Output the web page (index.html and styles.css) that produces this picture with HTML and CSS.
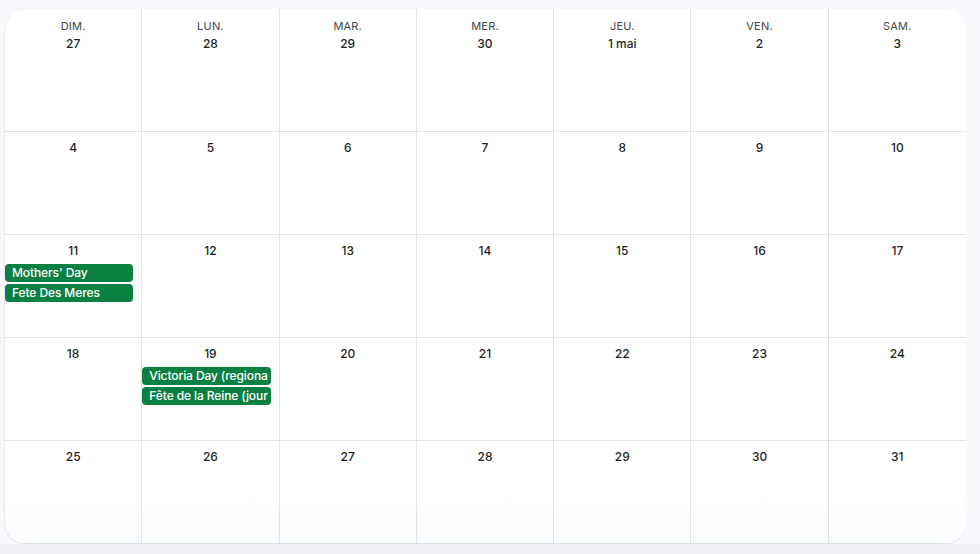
FILE: index.html
```html
<!DOCTYPE html>
<html lang="fr">
<head>
<meta charset="utf-8">
<title>Calendrier - mai</title>
<link rel="stylesheet" href="styles.css">
</head>
<body>
<div class="page">
  <div class="peek"></div>
  <div class="card">
    <div class="cell head"><div class="wd">DIM.</div><div class="dn">27</div></div>
    <div class="cell head"><div class="wd">LUN.</div><div class="dn">28</div></div>
    <div class="cell head"><div class="wd">MAR.</div><div class="dn">29</div></div>
    <div class="cell head"><div class="wd">MER.</div><div class="dn">30</div></div>
    <div class="cell head"><div class="wd">JEU.</div><div class="dn">1 mai</div></div>
    <div class="cell head"><div class="wd">VEN.</div><div class="dn">2</div></div>
    <div class="cell head last"><div class="wd">SAM.</div><div class="dn">3</div></div>

    <div class="cell"><div class="dn">4</div></div>
    <div class="cell"><div class="dn">5</div></div>
    <div class="cell"><div class="dn">6</div></div>
    <div class="cell"><div class="dn">7</div></div>
    <div class="cell"><div class="dn">8</div></div>
    <div class="cell"><div class="dn">9</div></div>
    <div class="cell last"><div class="dn">10</div></div>

    <div class="cell"><div class="dn">11</div>
      <div class="event">Mothers' Day</div>
      <div class="event">Fete Des Meres</div>
    </div>
    <div class="cell"><div class="dn">12</div></div>
    <div class="cell"><div class="dn">13</div></div>
    <div class="cell"><div class="dn">14</div></div>
    <div class="cell"><div class="dn">15</div></div>
    <div class="cell"><div class="dn">16</div></div>
    <div class="cell last"><div class="dn">17</div></div>

    <div class="cell"><div class="dn">18</div></div>
    <div class="cell"><div class="dn">19</div>
      <div class="event">Victoria Day (regiona</div>
      <div class="event">Fête de la Reine (jour</div>
    </div>
    <div class="cell"><div class="dn">20</div></div>
    <div class="cell"><div class="dn">21</div></div>
    <div class="cell"><div class="dn">22</div></div>
    <div class="cell"><div class="dn">23</div></div>
    <div class="cell last"><div class="dn">24</div></div>

    <div class="cell"><div class="dn">25</div></div>
    <div class="cell"><div class="dn">26</div></div>
    <div class="cell"><div class="dn">27</div></div>
    <div class="cell"><div class="dn">28</div></div>
    <div class="cell"><div class="dn">29</div></div>
    <div class="cell"><div class="dn">30</div></div>
    <div class="cell last"><div class="dn">31</div></div>
  </div>
  <div class="footer"></div>
</div>
</body>
</html>
```

FILE: styles.css
```css
html, body {
  margin: 0;
  padding: 0;
}
body {
  background: #f6f8fc;
  font-family: Inter, Roboto, "Liberation Sans", Arial, sans-serif;
  width: 980px;
  height: 554px;
  overflow: hidden;
}
.page {
  position: relative;
  padding-top: 9px;
  height: 554px;
  box-sizing: border-box;
}
.peek {
  position: absolute;
  top: -30px;
  right: -20px;
  width: 116px;
  height: 30px;
  border-radius: 10px;
  background: #f6f8fc;
  border: 1px solid #b4b6ba;
  border-bottom: 2px solid #9c9ea2;
  box-sizing: border-box;
}
.card {
  margin-left: 4px;
  width: 962px;
  height: 535px;
  background: linear-gradient(#ffffff 0, #ffffff 490px, #fafbfc 535px);
  border-radius: 22px;
  border-left: 1px solid #e6e9ef;
  box-sizing: border-box;
  overflow: hidden;
  display: grid;
  grid-template-columns: repeat(7, 1fr);
  grid-template-rows: 123px repeat(4, 103px);
  box-shadow: 0 1px 0 #dfe3e8;
}
.cell {
  border-right: 1px solid #dde3ea;
  border-bottom: 1px solid #dde3ea;
  padding-top: 6px;
  text-align: center;
  overflow: hidden;
  min-width: 0;
}
.cell.last {
  border-right: none;
}
.cell.head {
  padding-top: 10px;
}
.wd {
  font-size: 11px;
  line-height: 15px;
  font-weight: 400;
  color: #444746;
  letter-spacing: 0.2px;
}
.dn {
  font-size: 12px;
  line-height: 20px;
  font-weight: 500;
  color: #1f1f1f;
  margin-bottom: 3px;
}
.event {
  background: #0b8043;
  color: #ffffff;
  font-size: 12px;
  font-weight: 500;
  letter-spacing: -0.1px;
  line-height: 18px;
  height: 18px;
  border-radius: 4px;
  text-align: left;
  padding-left: 7px;
  margin: 0 8px 2px 0;
  white-space: nowrap;
  overflow: hidden;
}
.footer {
  position: absolute;
  left: 0;
  right: 0;
  bottom: 0;
  height: 10px;
  background: #eff1f5;
}
```
